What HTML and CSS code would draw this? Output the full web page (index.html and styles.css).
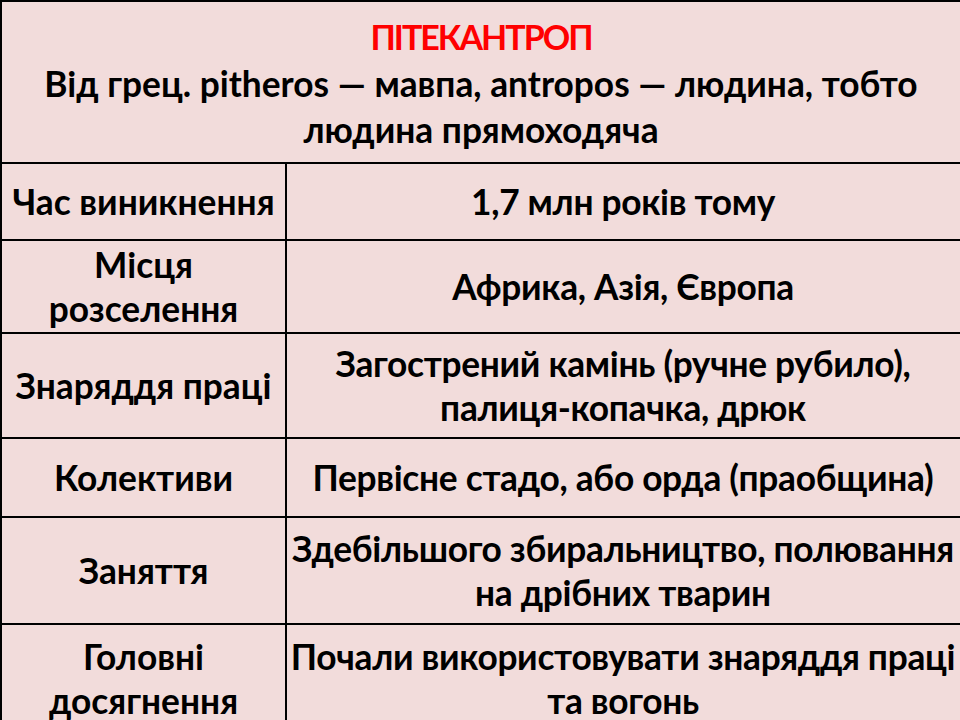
FILE: index.html
```html
<!DOCTYPE html>
<html lang="uk">
<head>
<meta charset="utf-8">
<link rel="stylesheet" href="styles.css">
</head>
<body>
<div class="table">
  <div class="title">
    <div class="red">ПІТЕКАНТРОП</div>
    <div>Від грец. pitheros — мавпа, antropos — людина, тобто</div>
    <div>людина прямоходяча</div>
  </div>
  <div class="row r1">
    <div class="cell left">Час виникнення</div>
    <div class="cell right">1,7 млн років тому</div>
  </div>
  <div class="row r2">
    <div class="cell left"><span>Місця</span><span>розселення</span></div>
    <div class="cell right">Африка, Азія, Європа</div>
  </div>
  <div class="row r3">
    <div class="cell left">Знаряддя праці</div>
    <div class="cell right"><span>Загострений камінь (ручне рубило),</span><span>палиця-копачка, дрюк</span></div>
  </div>
  <div class="row r4">
    <div class="cell left">Колективи</div>
    <div class="cell right">Первісне стадо, або орда (праобщина)</div>
  </div>
  <div class="row r5">
    <div class="cell left">Заняття</div>
    <div class="cell right"><span>Здебільшого збиральництво, полювання</span><span>на дрібних тварин</span></div>
  </div>
  <div class="row r6">
    <div class="cell left"><span>Головні</span><span>досягнення</span></div>
    <div class="cell right"><span>Почали використовувати знаряддя праці</span><span>та вогонь</span></div>
  </div>
</div>
</body>
</html>
```
FILE: styles.css
```css
html, body {
  margin: 0;
  padding: 0;
  background: #f2dcdb;
  overflow: hidden;
}
.table {
  width: 980px;
  height: 720px;
  overflow: hidden;
  border-top: 2px solid #000;
  border-left: 2px solid #000;
  box-sizing: border-box;
  font-family: Lato, "Open Sans", sans-serif;
  font-weight: 700;
  font-size: 35.3px;
  color: #000;
  text-align: center;
  white-space: nowrap;
}
.title {
  box-sizing: border-box;
  height: 162px;
  border-bottom: 2px solid #000;
  padding: 12px 0 0 0;
  width: 958px;
  line-height: 46.5px;
}
.red {
  color: #ff0000;
  font-size: 34px;
  letter-spacing: -2px;
}
.row {
  display: grid;
  grid-template-columns: 285px 672px;
  box-sizing: border-box;
  border-bottom: 2px solid #000;
  line-height: 44px;
}
.cell {
  display: flex;
  flex-direction: column;
  justify-content: center;
  align-items: center;
}
.left {
  border-right: 2px solid #000;
}
.right {
  letter-spacing: -0.3px;
}
.r1 { height: 77px; }
.r2 { height: 93px; }
.r3 { height: 105px; }
.r4 { height: 79px; }
.r5 { height: 107px; }
.r6 { height: 110px; }
```
